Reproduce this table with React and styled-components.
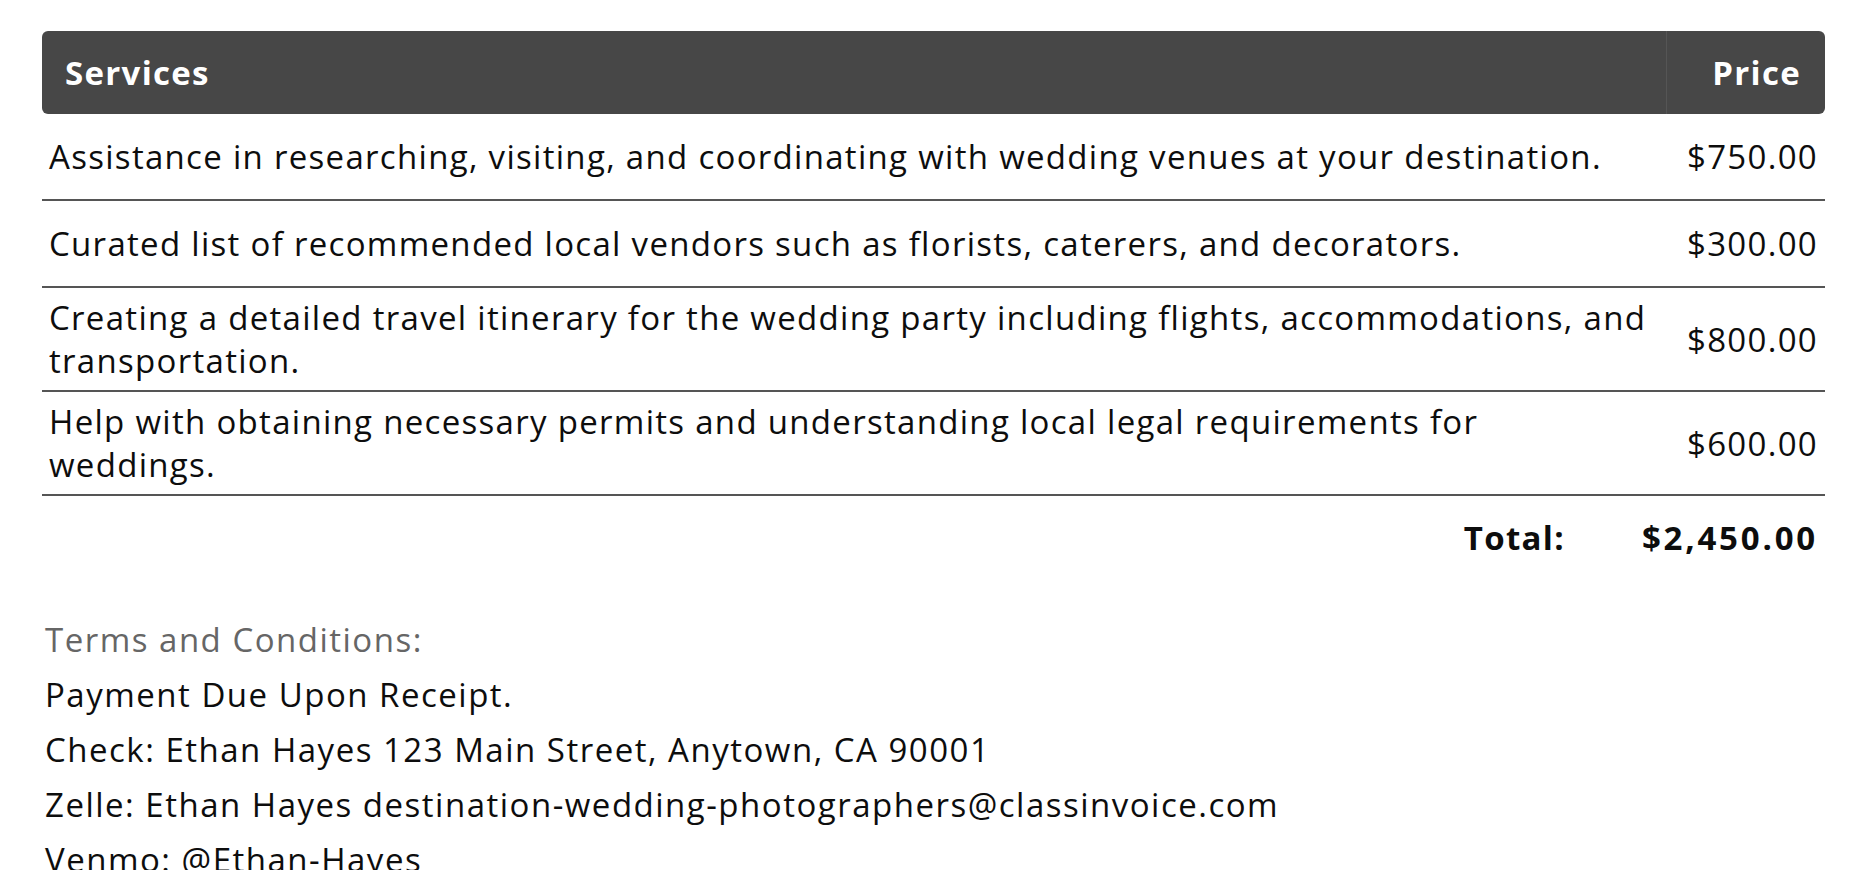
import React from 'react';
import styled, { createGlobalStyle } from 'styled-components';

const services = [
  { id: 1, text: 'Assistance in researching, visiting, and coordinating with wedding venues at your destination.', price: '$750.00' },
  { id: 2, text: 'Curated list of recommended local vendors such as florists, caterers, and decorators.', price: '$300.00' },
  { id: 3, text: 'Creating a detailed travel itinerary for the wedding party including flights, accommodations, and transportation.', price: '$800.00' },
  { id: 4, text: 'Help with obtaining necessary permits and understanding local legal requirements for weddings.', price: '$600.00' },
];

const terms = [
  'Payment Due Upon Receipt.',
  'Check: Ethan Hayes 123 Main Street, Anytown, CA 90001',
  'Zelle: Ethan Hayes destination-wedding-photographers@classinvoice.com',
  'Venmo: @Ethan-Hayes',
];

const GlobalStyle = createGlobalStyle`
  html, body {
    margin: 0;
    background: #ffffff;
    overflow: hidden;
  }
  body {
    font-family: "Open Sans", "Noto Sans", sans-serif;
    font-weight: 500;
    color: #0d0d0d;
    letter-spacing: 1.3px;
  }
`;

function App () {
  return (
    <>
      <GlobalStyle />
      <Page>
        <ServicesTable>
          <thead>
            <tr>
              <HeadCell first>Services</HeadCell>
              <HeadCell last>Price</HeadCell>
            </tr>
          </thead>
          <tbody>
            {services.map((item) => (
              <Row key={item.id}>
                <DescCell>{item.text}</DescCell>
                <PriceCell>{item.price}</PriceCell>
              </Row>
            ))}
          </tbody>
        </ServicesTable>
        <TotalRow>
          <TotalLabel>Total:</TotalLabel>
          <TotalValue>$2,450.00</TotalValue>
        </TotalRow>
        <Terms>
          <TermsTitle>Terms and Conditions:</TermsTitle>
          {terms.map((line) => (
            <TermsLine key={line}>{line}</TermsLine>
          ))}
        </Terms>
      </Page>
    </>
  );
}

const Page = styled('div')`
  padding: 31px 43px 0 42px;
`;

const ServicesTable = styled('table')`
  width: 100%;
  border-collapse: separate;
  border-spacing: 0;
  table-layout: fixed;
`;

const HeadCell = styled('th')`
  background: #474747;
  color: #fff;
  font-size: 33px;
  font-weight: 700;
  height: 83px;
  padding: 0 ${({ last }) => (last ? '24px' : '23px')};
  text-align: ${({ last }) => (last ? 'right' : 'left')};
  width: ${({ last }) => (last ? '159px' : 'auto')};
  border-left: ${({ last }) => (last ? '1px solid #555' : 'none')};
  border-radius: ${({ first, last }) => (first ? '6px 0 0 6px' : last ? '0 6px 6px 0' : '0')};
  box-sizing: border-box;
`;

const Row = styled('tr')`
  height: 87px;
`;

const DescCell = styled('td')`
  font-size: 33px;
  line-height: 43px;
  padding: 8px 18px 8px 7px;
  border-bottom: 2px solid #555;
  vertical-align: middle;
`;

const PriceCell = styled('td')`
  font-size: 33px;
  line-height: 43px;
  padding: 8px 7px;
  text-align: right;
  border-bottom: 2px solid #555;
  vertical-align: middle;
  white-space: nowrap;
`;

const TotalRow = styled('div')`
  display: flex;
  justify-content: flex-end;
  align-items: center;
  gap: 77px;
  padding: 20px 7px 0 0;
  font-size: 33px;
  font-weight: 700;
  line-height: 43px;
`;

const TotalLabel = styled('span')`
`;

const TotalValue = styled('span')`
  letter-spacing: 2.8px;
`;

const Terms = styled('div')`
  padding: 53px 0 0 3px;
  letter-spacing: 1.5px;
`;

const TermsTitle = styled('div')`
  color: #666;
  font-size: 33px;
  line-height: 55px;
`;

const TermsLine = styled('div')`
  font-size: 33px;
  line-height: 55px;
`;

export default App;
